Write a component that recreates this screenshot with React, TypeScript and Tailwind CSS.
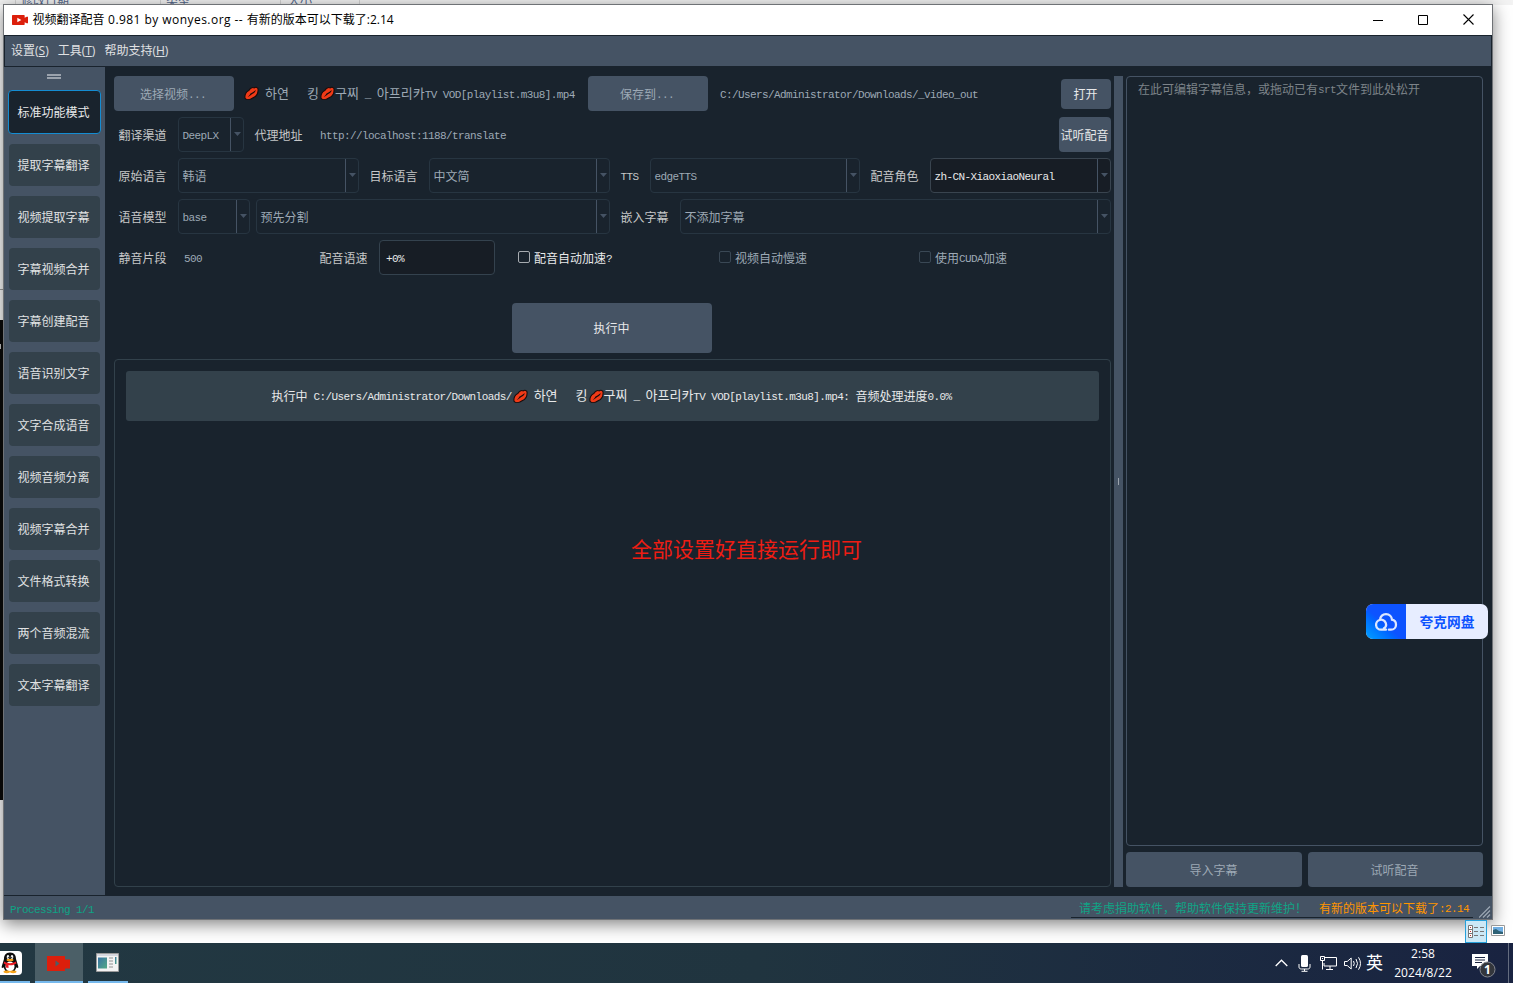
import { type ReactNode } from 'react';

const CJK = "font-['Noto_Sans_CJK_SC',sans-serif]";

/** Renders CJK runs at 12px and Latin runs in a 6px-wide monospace face. */
function T({ children, className = '' }: { children: string; className?: string }) {
  const runs = children.match(/[\x20-\x7e]+|[\uac00-\ud7a3]+|💋|[^\x20-\x7e\uac00-\ud7a3💋]+/gu) ?? [];
  return (
    <span className={`inline-flex h-4 shrink-0 items-center whitespace-pre text-[12px] leading-4 ${CJK} ${className}`}>
      {runs.map((run, i) => {
        if (run === '💋') return <Lips key={i} />;
        if (/^[\x20-\x7e]/.test(run))
          return (
            <span key={i} className="mt-0.5 font-['Liberation_Mono',monospace] text-[11px] leading-4 tracking-[-0.6px]">
              {run}
            </span>
          );
        if (/^[\uac00-\ud7a3]/.test(run))
          return (
            <span key={i} className="-mt-0.5 font-['Noto_Sans_CJK_KR',sans-serif] text-[13px] leading-4">
              {run}
            </span>
          );
        return <span key={i}>{run}</span>;
      })}
    </span>
  );
}

function Lips() {
  return (
    <svg className="ml-px h-[15px] w-[15px] shrink-0" viewBox="0 0 14 14">
      <path d="M1 11.500C.3 8.300 2 5 4.500 4.200 5.600 2 8 .8 9.300 1.800 11 .7 13.200 1.200 13.100 3c.3 4-1.600 6.700-4.600 8-2.700 1.900-6 2.300-7.500.5Z" fill="#f03a17" stroke="#160b0b" strokeWidth="1" />
      <path d="M3.500 10C5.500 9 5.400 6.900 7 6.500 8.900 6 9.700 4.500 11 3.800 10.500 6.300 8.800 6.900 7.600 7.500 6 9 5 9.800 3.500 10Z" fill="#160b0b" />
    </svg>
  );
}

function Camera({ className }: { className: string }) {
  return (
    <svg className={className} viewBox="0 0 24 15">
      <path d="M1 0h17a1 1 0 0 1 1 1v3l3-1.500h2v10h-2l-3-1.500v3a1 1 0 0 1-1 1H1a1 1 0 0 1-1-1V1a1 1 0 0 1 1-1Z" fill="#dc1f0c" />
      <path d="M8 4v7l6-3.500Z" fill="#fff" />
    </svg>
  );
}

function Combo({ text, className, active = false }: { text: string; className: string; active?: boolean }) {
  return (
    <div
      className={`flex h-[35px] shrink-0 overflow-hidden rounded border ${
        active ? 'border-[#39444f] bg-[#171d25] text-[#e8e9ea]' : 'border-[#273541] text-[#9da9b5]'
      } ${className}`}
    >
      <div className="flex flex-1 items-center pl-[3.500px] pt-px">
        <T>{text}</T>
      </div>
      <div className="flex w-[13px] items-center justify-center border-l border-[#455364]">
        <svg className="mb-0.5 h-1 w-[7px]" viewBox="0 0 7 4">
          <path d="M0 0h7L3.500 4Z" fill="#455364" />
        </svg>
      </div>
    </div>
  );
}

function Label({ text, className }: { text: string; className: string }) {
  return (
    <div className={`flex h-[35px] shrink-0 items-center pt-px text-[#c6c7c8] ${className}`}>
      <T className="ml-[0.500px]">{text}</T>
    </div>
  );
}

function Button({ text, className }: { text: string; className: string }) {
  return (
    <div className={`flex items-center justify-center rounded bg-[#455364] ${className}`}>
      <T className="-ml-px">{text}</T>
    </div>
  );
}

function Check({ text, className, box }: { text: string; className: string; box: string }) {
  return (
    <div className={`flex h-[35px] shrink-0 items-center ${className}`}>
      <span className={`mr-1 mb-0.5 size-[12px] rounded-[2px] border ${box}`} />
      <T>{text}</T>
    </div>
  );
}

const MODES = [
  '标准功能模式', '提取字幕翻译', '视频提取字幕', '字幕视频合并', '字幕创建配音', '语音识别文字',
  '文字合成语音', '视频音频分离', '视频字幕合并', '文件格式转换', '两个音频混流', '文本字幕翻译',
];

function Sidebar() {
  return (
    <aside className="flex w-[101px] shrink-0 flex-col items-center bg-[#455364] pt-[7px]">
      <div className="mr-0.5 mb-[11px] flex h-[5px] w-[14px] flex-col justify-between">
        <div className="h-0.5 bg-[#9ba3ad]" />
        <div className="h-0.5 bg-[#9ba3ad]" />
      </div>
      <div className="flex flex-col items-center">
        {MODES.map((mode, i) => (
          <div
            key={mode}
            className={
              i === 0
                ? 'mb-[10px] flex h-[44px] w-[93px] items-center justify-center rounded border border-[#148cd2] bg-[#19232d] pr-0.5 text-[#e8e9ea]'
                : 'mb-[10px] flex h-[42px] w-[91px] items-center justify-center rounded bg-[#33414b] pr-0.5 text-[#e0e1e3]'
            }
          >
            <T>{mode}</T>
          </div>
        ))}
      </div>
    </aside>
  );
}

function Settings() {
  return (
    <section className="flex w-[997px] shrink-0 flex-col">
      <div className="flex flex-col gap-[6px]">
        <div className="flex items-center text-[#9da9b5]">
          <Button text="选择视频..." className="h-[35px] w-[120px] pr-px" />
          <div className="ml-[9px] flex w-[345px] items-center">
            <T>{'💋 하연   킹💋구찌 _ 아프리카TV VOD[playlist.m3u8].mp4'}</T>
          </div>
          <Button text="保存到..." className="h-[35px] w-[120px] pr-px" />
          <T className="ml-3">C:/Users/Administrator/Downloads/_video_out</T>
          <Button text="打开" className="ml-auto -mb-px h-[30px] w-[50px] text-[#e8e9ea]" />
        </div>
        <div className="flex text-[#9da9b5]">
          <Label text="翻译渠道" className="w-[64px] pl-1" />
          <Combo text="DeepLX" className="w-[66px]" />
          <Label text="代理地址" className="w-[76px] pl-[10px]" />
          <div className="flex items-center pt-px">
            <T>http://localhost:1188/translate</T>
          </div>
          <Button text="试听配音" className="ml-auto h-[35px] w-[52px] text-[#e8e9ea]" />
        </div>
        <div className="flex">
          <Label text="原始语言" className="w-[64px] pl-1" />
          <Combo text="韩语" className="w-[181px]" />
          <Label text="目标语言" className="w-[70px] pl-[10px]" />
          <Combo text="中文简" className="w-[181px]" />
          <Label text="TTS" className="w-[40px] pl-[10px]" />
          <Combo text="edgeTTS" className="w-[210px]" />
          <Label text="配音角色" className="w-[70px] pl-[10px]" />
          <Combo text="zh-CN-XiaoxiaoNeural" className="w-[181px]" active />
        </div>
        <div className="flex">
          <Label text="语音模型" className="w-[64px] pl-1" />
          <Combo text="base" className="mr-[6px] w-[72px]" />
          <Combo text="预先分割" className="w-[354px]" />
          <Label text="嵌入字幕" className="w-[70px] pl-[10px]" />
          <Combo text="不添加字幕" className="w-[431px]" />
        </div>
        <div className="flex text-[#9da9b5]">
          <Label text="静音片段" className="w-[70px] pl-1" />
          <div className="flex w-[125px] items-center pt-px">
            <T>500</T>
          </div>
          <Label text="配音语速" className="w-[70px] pl-[10px]" />
          <div className="flex h-[35px] w-[116px] items-center rounded border border-[#34424e] bg-[#171d25] pl-[6px] text-[#e8e9ea]">
            <T>+0%</T>
          </div>
          <Check text="配音自动加速?" className="w-[224px] pl-[23px] text-[#e8e9ea]" box="border-[#a6abb0]" />
          <Check text="视频自动慢速" className="w-[200px]" box="border-[#3a4855]" />
          <Check text="使用CUDA加速" className="w-[150px]" box="border-[#3a4855]" />
        </div>
      </div>
      <div className="flex justify-center pt-7 pr-px pb-[6px]">
        <Button text="执行中" className="h-[50px] w-[200px] text-[#e8e9ea]" />
      </div>
      <div className="h-[528px] rounded border border-[#32414b] p-[11px]">
        <div className="flex h-[50px] items-center justify-center rounded-[3px] bg-[#33414b] pr-0.5 text-[#e8e9ea]">
          <T>{'执行中 C:/Users/Administrator/Downloads/💋 하연   킹💋구찌 _ 아프리카TV VOD[playlist.m3u8].mp4: 音频处理进度0.0%'}</T>
        </div>
      </div>
    </section>
  );
}

function Subtitles() {
  return (
    <section className="ml-[3px] flex w-[357px] shrink-0 flex-col gap-[6px]">
      <div className="flex h-[770px] items-start rounded border border-[#455364] pt-1 pl-[11px] text-[#7d8389]">
        <T>在此可编辑字幕信息，或拖动已有srt文件到此处松开</T>
      </div>
      <div className="flex gap-[6px] text-[#9da9b5]">
        <Button text="导入字幕" className="h-[35px] w-[176px]" />
        <Button text="试听配音" className="h-[35px] w-[175px] pr-px" />
      </div>
    </section>
  );
}

function Menu({ children }: { children: ReactNode }) {
  return <span className="whitespace-pre">{children}</span>;
}

function AppWindow() {
  return (
    <div className="absolute top-[4px] left-[3px] flex h-[916px] w-[1490px] flex-col border border-[#6f7276] bg-[#19232d] shadow-[0_4px_16px_rgba(0,0,0,0.5)]">
      <header className="flex h-[30px] shrink-0 items-center bg-white">
        <Camera className="ml-2 h-[10px] w-4" />
        <h1 className="ml-[4.500px] whitespace-pre font-['Open_Sans','Noto_Sans_CJK_SC',sans-serif] text-[12px] leading-4 text-black">
          视频翻译配音<span className="tracking-[0.450px]"> 0.981 by wonyes.org -- </span>有新的版本可以下载了<span>:2.14</span>
        </h1>
        <div className="mr-[18px] ml-auto flex items-center gap-[35px]">
          <svg className="h-[11px] w-[10px]" viewBox="0 0 10 11"><path d="M0 5.500h10" stroke="#000" /></svg>
          <svg className="-mt-px h-[10px] w-[10px]" viewBox="0 0 10 10"><path d="M.5.500h9v9h-9Z" fill="none" stroke="#000" /></svg>
          <svg className="-mt-px h-[11px] w-[11px]" viewBox="0 0 11 11"><path d="m.5.500 10 10m0-10-10 10" stroke="#000" strokeWidth="1.100" /></svg>
        </div>
      </header>
      <nav className="mx-px mt-px flex h-[30px] shrink-0 items-center gap-[9px] bg-[#455364] pl-[6px] font-['Open_Sans','Noto_Sans_CJK_SC',sans-serif] text-[12px] text-[#e0e1e3]">
        <Menu>设置(<u>S</u>)</Menu>
        <Menu>工具(<u>T</u>)</Menu>
        <Menu>帮助支持(<u>H</u>)</Menu>
      </nav>
      <div className="mt-px flex h-[828px] shrink-0">
        <Sidebar />
        <main className="flex flex-1 pt-[9px] pb-2 pl-[9px]">
          <Settings />
          <div className="ml-[3px] flex h-[811px] w-[9px] shrink-0 items-center justify-center bg-[#455364]">
            <div className="h-[7px] w-px bg-[#9ba3ad]" />
          </div>
          <Subtitles />
        </main>
      </div>
      <footer className="mt-px flex h-[23px] shrink-0 items-center bg-[#455364] pl-[6px]">
        <T className="pt-0.5 text-[#0fa485]">Processing 1/1</T>
        <div className="mr-[19px] ml-auto flex h-[21px] w-[402px] items-center border-b border-[#19232d] pt-0.5 pl-2">
          <T className="w-[240px] text-[#0fa485]">请考虑捐助软件，帮助软件保持更新维护！</T>
          <T className="text-[#ff9500]">有新的版本可以下载了:2.14</T>
        </div>
        <svg className="absolute right-px bottom-px h-3 w-3" viewBox="0 0 12 12">
          <path d="M0 11.500 11 .500M4 11.500l7-7M8 11.500l3-3" stroke="#9da9b5" strokeWidth="1.200" />
        </svg>
      </footer>
    </div>
  );
}

function QQ() {
  return (
    <svg className="h-6 w-[22px]" viewBox="0 0 22 24">
      <path d="M0 0h18a4 4 0 0 1 4 4v16a4 4 0 0 1-4 4H0Z" fill="#fff" />
      <path d="M10 1.500c-4.500 0-6 3-6 6.500L2 14.500c-.7 2-.3 3.300 1.500 1.800L5.500 20h9l2-3.700c1.800 1.500 2.200.2 1.500-1.800L16 8c0-3.500-1.500-6.500-6-6.500Z" fill="#0d0d0d" />
      <ellipse cx="10" cy="15.500" rx="4.500" ry="5" fill="#fff" />
      <ellipse cx="8" cy="6" rx="1.300" ry="2" fill="#fff" />
      <ellipse cx="12" cy="6" rx="1.300" ry="2" fill="#fff" />
      <circle cx="8.300" cy="6.300" r=".6" />
      <circle cx="11.700" cy="6.300" r=".6" />
      <ellipse cx="10" cy="9" rx="3.500" ry="1.200" fill="#f7a51b" />
      <path d="M4 10.500c4 2.200 8 2.200 12 0l.5 2C12.500 14.500 11 14.500 8.500 14v3L5.700 16.500v-3L3.700 12.500Z" fill="#ec1c24" />
      <ellipse cx="6.800" cy="20.800" rx="3.300" ry="1.400" fill="#f7a51b" />
      <ellipse cx="13.200" cy="20.800" rx="3.300" ry="1.400" fill="#f7a51b" />
    </svg>
  );
}

function Taskbar() {
  return (
    <div className="absolute top-[943px] left-0 flex h-10 w-[1513px] bg-linear-to-r from-[#223842] via-[#20343f] to-[#192341] text-white">
      <div className="flex w-[30px] items-center border-b-2 border-[#76b9ed] pt-0.5"><QQ /></div>
      <div className="ml-[5px] flex w-12 items-center justify-center border-b-2 border-[#76b9ed] bg-[#4b5f67]">
        <svg className="mt-0.5 h-[15px] w-6" viewBox="0 0 24 15">
          <path d="M0 0h18v3.500h5v9h-5V15H0Z" fill="#dc1f0c" />
          <path d="M8.500 4.500v6l4-3Z" fill="#4b5f67" />
        </svg>
      </div>
      <div className="ml-[5px] flex w-10 items-center justify-center border-b-2 border-[#76b9ed] pr-0.5">
        <svg className="h-[19px] w-[23px]" viewBox="0 0 23 19">
          <defs><linearGradient id="app" x2="1" y2="1"><stop stopColor="#3972a4" /><stop offset="1" stopColor="#51a985" /></linearGradient></defs>
          <path d="M.5.500h22v18H.5Z" fill="#f3f3f3" stroke="#9b9b9b" />
          <path d="M1 1h21v2H1Z" fill="#d5d7df" />
          <path d="M2 4.500h9v11H2Z" fill="url(#app)" />
          <path d="M13 5h4M13 8h4M13 11h4M13 14h4" stroke="#c2c2c2" strokeWidth="2" />
          <path d="M19 4h1.500v7H19Z" fill="url(#app)" />
        </svg>
      </div>
      <div className="ml-auto flex items-center">
        <svg className="h-2 w-[13px]" viewBox="0 0 13 8"><path d="m.7 7 5.800-5.800L12.300 7" fill="none" stroke="#fff" strokeWidth="1.300" /></svg>
        <svg className="ml-[10px] h-[17px] w-[13px]" viewBox="0 0 13 17">
          <rect x="3" width="7" height="12" rx="1.500" fill="#fff" />
          <path d="M1 9v3c0 1.500 1 2 2.500 2h6c1.500 0 2.500-.5 2.500-2V9M6.500 14v2M3.500 16.300h6" fill="none" stroke="#fff" />
        </svg>
        <svg className="ml-[9px] h-[15px] w-[17px]" viewBox="0 0 17 15">
          <path d="M5 1.500h11.500v8.500H4V7M10 10v3.500M6 13.500h7M.5.500h4v4h-4ZM2.500 4.500v9" fill="none" stroke="#fff" />
          <path d="M2 2h1v1H2Z" fill="#fff" />
        </svg>
        <svg className="ml-[7px] h-[15px] w-[18px]" viewBox="0 0 18 15">
          <path d="M.5 5.500h2.700l4-3.500v11l-4-3.500H.5ZM9.500 5q1.500 2.500 0 5M12 3q3 4.500 0 9M14.500 1.300q4 6.200 0 12.400" fill="none" stroke="#fff" />
        </svg>
        <span className={`-mt-0.5 ml-[4px] w-4 text-[17px] leading-5 ${CJK}`}>英</span>
        <div className="ml-[10px] w-[62px] text-center font-['Open_Sans',sans-serif] text-[12px] leading-[19px] tracking-[0.100px] whitespace-nowrap">
          <div>2:58</div>
          <div>2024/8/22</div>
        </div>
        <div className="relative ml-[18px] h-6 w-6">
          <svg className="h-6 w-6 overflow-visible" viewBox="0 0 24 24">
            <path d="M0 3h16v12H8l-3 3v-3H0Z" fill="#fff" />
            <path d="M3 6.500h10M3 9h10M3 11.500h7" stroke="#1b2541" />
            <circle cx="15.500" cy="18.500" r="7.500" fill="#33363c" stroke="#82868f" />
          </svg>
          <span className="absolute top-[11px] left-[12px] font-['Open_Sans',sans-serif] text-[12px] leading-4 font-bold">1</span>
        </div>
        <div className="ml-[12px] h-10 w-px bg-[#646c7f]" />
        <div className="w-1" />
      </div>
    </div>
  );
}

function Desktop() {
  return (
    <div className={`flex h-[943px] w-[1513px] flex-col overflow-hidden bg-white ${CJK}`}>
      <div className="flex h-[5px] shrink-0 overflow-hidden bg-[#f3f3f3] text-[12px] leading-4 text-[#54678c]">
        <div className="ml-[15px] w-[145px] border-l border-[#d5d5d5] pl-[5px]"><div className="-mt-2">修改日期</div></div>
        <div className="w-[120px] border-l border-[#d5d5d5] pl-[5px]"><div className="-mt-2">类型</div></div>
        <div className="w-[80px] border-x border-[#d5d5d5] pl-[7px]"><div className="-mt-2">大小</div></div>
      </div>
      <div className="mt-[284px] h-px w-1 shrink-0 bg-[#a0a0a0]" />
      <div className="mt-[30px] h-[480px] w-1 shrink-0 bg-[#0b0b0b] pt-6">
        <div className="h-[5px] w-px bg-[#c8c8c8]" />
      </div>
    </div>
  );
}

export default function App() {
  return (
    <div className="relative h-[983px] w-[1513px] overflow-hidden bg-white">
      <Desktop />
      <AppWindow />
      <div className={`absolute top-[535px] left-[631px] text-[21px] leading-[26px] whitespace-nowrap text-[#ee1d13] ${CJK}`}>
        全部设置好直接运行即可
      </div>
      <div className="absolute top-[604px] left-[1366px] flex h-[35px] w-[122px] overflow-hidden rounded-[7px] bg-[#e7edff]">
        <div className="flex w-10 items-center justify-center bg-linear-to-tr from-[#0aa1ff] via-[#0d53ff] via-45% to-[#0d53ff]">
          <svg className="h-[20px] w-[24px]" viewBox="0 0 26 22">
            <path d="M13 19.500H7.500a5.500 5.500 0 1 1 5.200-7.500c1 3-.2 5-2 6M6.500 8.500C7 4.500 9.500 2.300 13 2.300c3.800 0 6.300 2.700 6.600 6.200 2.700.5 4.400 2.800 4.400 5.400 0 3.200-2.400 5.600-5.500 5.600h-2.300" fill="none" stroke="#dce7ff" strokeWidth="2.500" strokeLinecap="round" />
          </svg>
        </div>
        <div className={`flex flex-1 items-center justify-center text-[13.700px] font-bold text-[#0d53ff] ${CJK}`}>夸克网盘</div>
      </div>
      <div className="absolute top-[920px] left-[1465px] flex items-center gap-[4px]">
        <div className="flex h-[23px] w-[22px] items-center justify-center border border-[#26a0da] bg-[#cbe8f6]">
          <svg className="h-[13px] w-[16px]" viewBox="0 0 16 13">
            <path d="M.5.500h4v12h-4ZM.5 4.500h4M.5 8.500h4" fill="#fff" stroke="#777" />
            <path d="M6 2.500h4M12 2.500h4M6 6.500h4M12 6.500h4M6 10.500h4M12 10.500h4" stroke="#777" />
            <path d="M2 2h1v1H2ZM2 6h1v1H2ZM2 10h1v1H2Z" fill="#b33" />
          </svg>
        </div>
        <svg className="mb-0.5 h-[11px] w-[14px]" viewBox="0 0 14 11">
          <path d="M.5.500h13v10H.5Z" fill="#fff" stroke="#999" />
          <path d="M2 2h10v7H2Z" fill="#70aee2" />
          <path d="m2 5 3-1 3 2 4 1v2H2Z" fill="#2d6175" />
        </svg>
      </div>
      <Taskbar />
    </div>
  );
}
